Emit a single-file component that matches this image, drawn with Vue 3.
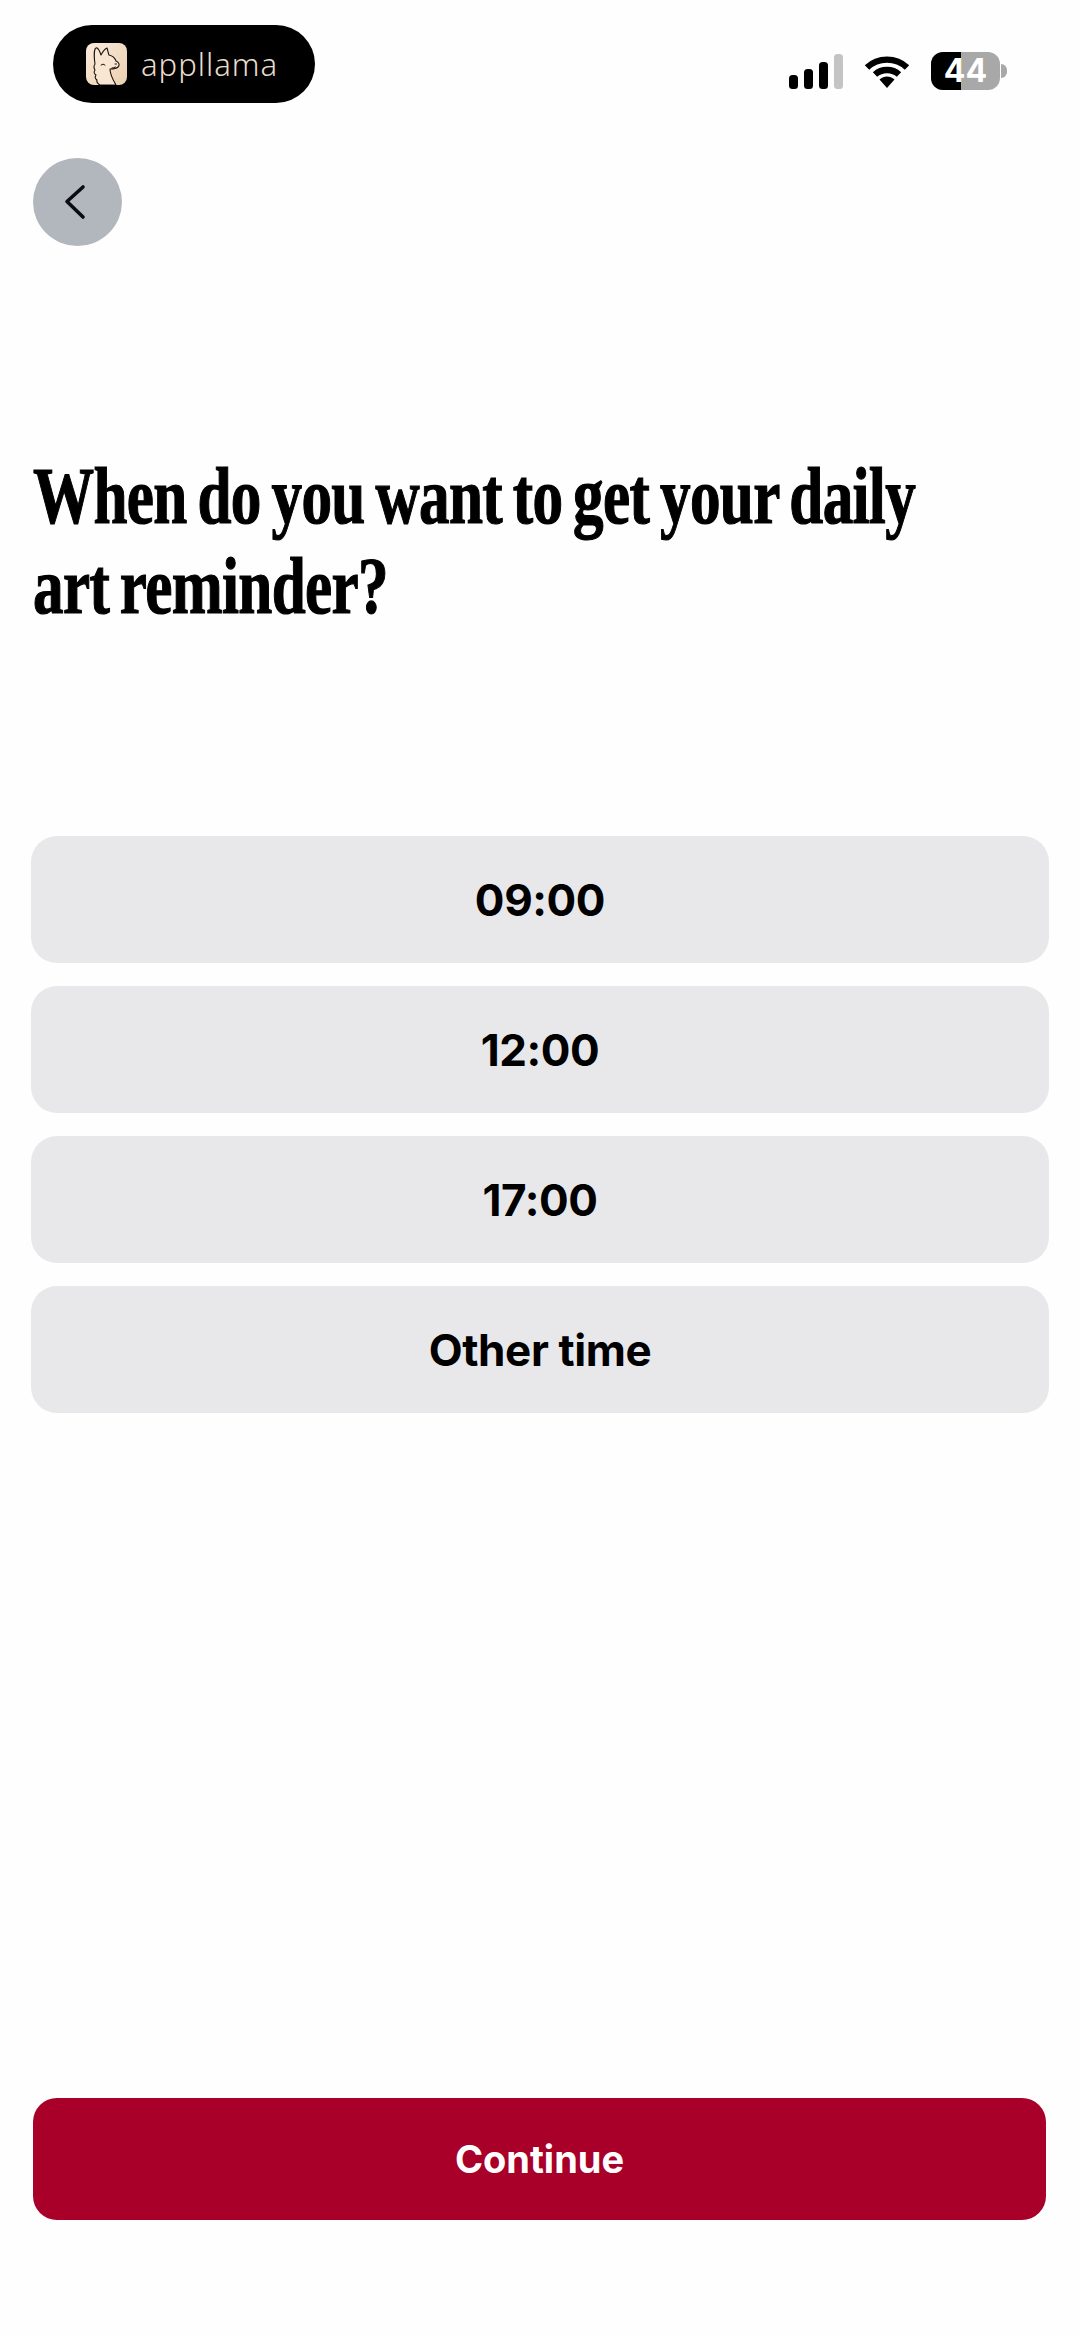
<script setup>
const options = ['09:00', '12:00', '17:00', 'Other time']
</script>

<template>
  <main class="screen">
    <header class="status">
      <div class="brand">
        <svg class="llama" viewBox="0 0 41 42">
          <defs>
            <linearGradient id="lg" x1="0" y1="0" x2="1" y2="1">
              <stop offset="0" stop-color="#fbeadb" />
              <stop offset="1" stop-color="#eccfb0" />
            </linearGradient>
          </defs>
          <rect width="41" height="42" rx="8" fill="url(#lg)" />
          <path d="M14 42Q10 40 11 37Q8 35 10 32Q7 30 9 27Q7 24 9 21C8 14 8 6 10 5C12 4 14 9 15 12C17 8 19 6 21 5C22 8 22 10 23 12C27 13 29 15 30 18C33 19 34 22 32 24C30 26 26 26 24 26C24 32 27 37 30 42Z" fill="#f8e6d3" stroke="#1c1410" stroke-width="1.100" stroke-linejoin="round" />
          <path d="M15 22q2-2 4 0M29 21h1.500M26 25q2 0 3.500-1" fill="none" stroke="#1c1410" stroke-width="1" stroke-linecap="round" />
        </svg>
        <span class="word">appllama</span>
      </div>
      <div class="indicators">
        <svg class="signal" width="54" height="35" viewBox="0 0 54 35">
          <rect x="0" y="21" width="9" height="14" rx="3.500" fill="#000" />
          <rect x="15" y="15" width="9" height="20" rx="3.500" fill="#000" />
          <rect x="30" y="8" width="9" height="27" rx="3.500" fill="#000" />
          <rect x="45" y="0" width="9" height="35" rx="3.500" fill="#c4c4c4" />
        </svg>
        <svg class="wifi" width="46" height="34" viewBox="0 0 46 34">
          <path d="M3 13.500C14 3 32 3 43 13.500" fill="none" stroke="#000" stroke-width="6.400" />
          <path d="M11 20.500C17.500 14.500 28.500 14.500 35 20.500" fill="none" stroke="#000" stroke-width="6.400" />
          <path d="M15.500 25.500C20 21.500 26 21.500 30.500 25.500L23 34Z" fill="#000" />
        </svg>
        <div class="battery">
          <div class="cell">
            <span class="cell-fill"></span>
            <span class="cell-level">44</span>
          </div>
          <span class="tip"></span>
        </div>
      </div>
    </header>

    <button class="back" type="button" aria-label="Back">
      <svg width="24" height="36" viewBox="0 0 24 36">
        <path d="M20 3L4 17.500L20 33" fill="none" stroke="#0b0b12" stroke-width="3.600" stroke-linecap="round" stroke-linejoin="round" />
      </svg>
    </button>

    <h1 class="title">When do you want to get your daily<br />art reminder?</h1>

    <section class="options">
      <button v-for="option in options" :key="option" class="option" type="button">{{ option }}</button>
    </section>

    <button class="continue" type="button">Continue</button>
  </main>
</template>

<style>
html, body { margin: 0; background: #fefefe; }
</style>

<style scoped>
.screen {
  width: 1080px;
  height: 2336px;
  box-sizing: border-box;
  display: flex;
  flex-direction: column;
  background: #fefefe;
  overflow: hidden;
  font-family: Inter, "Liberation Sans", sans-serif;
  color: #000;
}
.status {
  display: flex;
  justify-content: space-between;
  align-items: flex-start;
  padding: 25px 73px 0 53px;
  height: 133px;
  box-sizing: border-box;
}
.brand {
  width: 262px;
  height: 78px;
  border-radius: 39px;
  background: #000;
  display: flex;
  align-items: center;
  padding-left: 33px;
  box-sizing: border-box;
  gap: 14px;
}
.llama { width: 41px; height: 42px; flex: none; }
.word {
  font-family: "Noto Sans", sans-serif;
  font-weight: 300;
  font-size: 31px;
  color: #e9dccb;
  letter-spacing: 1px;
}
.indicators {
  display: flex;
  align-items: center;
  margin-top: 27px;
  gap: 21px;
}
.battery { display: flex; align-items: center; gap: 1px; }
.cell {
  position: relative;
  width: 69px;
  height: 38px;
  border-radius: 12px;
  background: #a8a8a8;
  overflow: hidden;
  display: flex;
  align-items: center;
  justify-content: center;
}
.cell-fill { position: absolute; left: 0; top: 0; bottom: 0; width: 30px; background: #000; }
.cell-level {
  position: relative;
  color: #fff;
  font-family: Inter, sans-serif;
  font-weight: 700;
  font-size: 32px;
  line-height: 1;
}
.tip {
  width: 6px;
  height: 14px;
  background: #a8a8a8;
  border-radius: 0 7px 7px 0;
}
.back {
  width: 89px;
  height: 88px;
  margin: 25px 0 0 33px;
  padding: 0 6px 0 0;
  border: 0;
  border-radius: 50%;
  background: #b2b7be;
  display: flex;
  align-items: center;
  justify-content: center;
}
.title {
  margin: 205px 0 0 33px;
  width: 1000px;
  font-family: "Liberation Serif", serif;
  font-weight: 700;
  font-size: 80px;
  line-height: 90px;
  letter-spacing: -0.9px;
  word-spacing: -5px;
  white-space: nowrap;
  -webkit-text-stroke: 1.2px #000;
  transform: scaleX(0.765);
  transform-origin: left center;
}
.options {
  margin: 205px 31px 0;
  display: flex;
  flex-direction: column;
  gap: 23px;
}
.option {
  height: 127px;
  border: 0;
  padding: 0;
  border-radius: 26px;
  background: #e8e8ea;
  color: #000;
  font-family: Inter, sans-serif;
  font-weight: 700;
  font-size: 44px;
  letter-spacing: -0.4px;
}
.continue {
  margin: auto 34px 116px 33px;
  height: 122px;
  border: 0;
  padding: 0;
  border-radius: 24px;
  background: #a80028;
  color: #fff;
  font-family: Inter, sans-serif;
  font-weight: 700;
  font-size: 38px;
}
</style>
